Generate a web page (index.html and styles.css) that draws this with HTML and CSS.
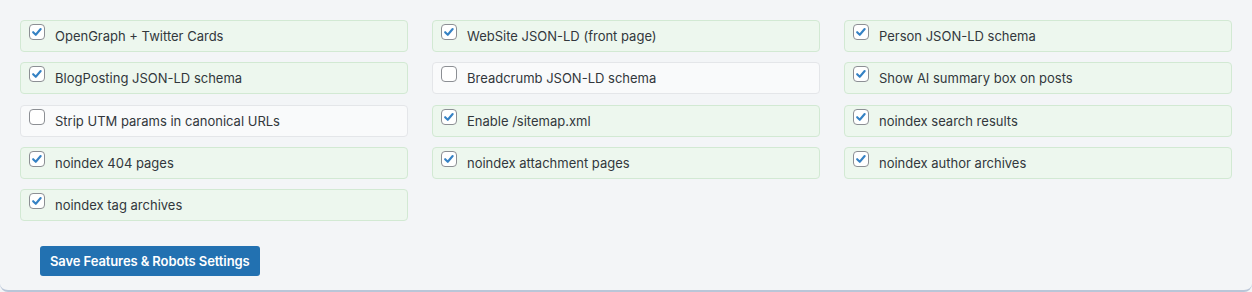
FILE: index.html
```html
<!DOCTYPE html>
<html lang="en">
<head>
  <meta charset="UTF-8">
  <title>Features &amp; Robots</title>
  <link rel="stylesheet" href="styles.css">
</head>
<body>
  <div class="panel">
    <div class="features">
      <label class="feature on"><span class="box"><svg viewBox="0 0 16 16"><path d="M3.6 8.2l3 3 5.6-6.6"/></svg></span>OpenGraph + Twitter Cards</label>
      <label class="feature on"><span class="box"><svg viewBox="0 0 16 16"><path d="M3.6 8.2l3 3 5.6-6.6"/></svg></span>WebSite JSON-LD (front page)</label>
      <label class="feature on"><span class="box"><svg viewBox="0 0 16 16"><path d="M3.6 8.2l3 3 5.6-6.6"/></svg></span>Person JSON-LD schema</label>
      <label class="feature on"><span class="box"><svg viewBox="0 0 16 16"><path d="M3.6 8.2l3 3 5.6-6.6"/></svg></span>BlogPosting JSON-LD schema</label>
      <label class="feature"><span class="box"></span>Breadcrumb JSON-LD schema</label>
      <label class="feature on"><span class="box"><svg viewBox="0 0 16 16"><path d="M3.6 8.2l3 3 5.6-6.6"/></svg></span>Show AI summary box on posts</label>
      <label class="feature"><span class="box"></span>Strip UTM params in canonical URLs</label>
      <label class="feature on"><span class="box"><svg viewBox="0 0 16 16"><path d="M3.6 8.2l3 3 5.6-6.6"/></svg></span>Enable /sitemap.xml</label>
      <label class="feature on"><span class="box"><svg viewBox="0 0 16 16"><path d="M3.6 8.2l3 3 5.6-6.6"/></svg></span>noindex search results</label>
      <label class="feature on"><span class="box"><svg viewBox="0 0 16 16"><path d="M3.6 8.2l3 3 5.6-6.6"/></svg></span>noindex 404 pages</label>
      <label class="feature on"><span class="box"><svg viewBox="0 0 16 16"><path d="M3.6 8.2l3 3 5.6-6.6"/></svg></span>noindex attachment pages</label>
      <label class="feature on"><span class="box"><svg viewBox="0 0 16 16"><path d="M3.6 8.2l3 3 5.6-6.6"/></svg></span>noindex author archives</label>
      <label class="feature on"><span class="box"><svg viewBox="0 0 16 16"><path d="M3.6 8.2l3 3 5.6-6.6"/></svg></span>noindex tag archives</label>
    </div>
    <button class="button" type="submit">Save Features &amp; Robots Settings</button>
  </div>
</body>
</html>
```

FILE: styles.css
```css
* {
  margin: 0;
  padding: 0;
  box-sizing: border-box;
  font-family: Inter, 'Liberation Sans', sans-serif;
}

body {
  background: #f3f5f7;
}

.panel {
  height: 292px;
  padding: 20px 20px 0;
  background: #f3f5f7;
  border-bottom: 2px solid #b9c6d8;
  border-radius: 0 0 8px 8px;
}

.features {
  display: grid;
  grid-template-columns: repeat(3, 388px);
  column-gap: 24px;
  row-gap: 10.25px;
}

.feature {
  display: flex;
  align-items: center;
  height: 32px;
  padding: 0 8px;
  border: 1px solid #e4e6e9;
  border-radius: 4px;
  background: #f9fafb;
  font-size: 13px;
  color: #32373c;
  cursor: pointer;
}

.feature.on {
  background: #edf7ee;
  border-color: #d2e9d3;
}

.box {
  align-self: flex-start;
  width: 16px;
  height: 16px;
  margin: 3px 10px 0 0;
  border: 1px solid #8c8f94;
  border-radius: 4px;
  background: #fff;
  flex: none;
}

.box svg {
  display: block;
  width: 14px;
  height: 14px;
  fill: none;
  stroke: #3582c4;
  stroke-width: 2.4;
  stroke-linecap: round;
  stroke-linejoin: round;
}

.button {
  margin: 25px 0 0 20px;
  height: 30px;
  padding: 0 10px;
  border: none;
  border-radius: 3px;
  background: #2271b1;
  color: #fff;
  font-size: 13px;
  font-weight: 600;
  letter-spacing: -0.1px;
  cursor: pointer;
}
```
